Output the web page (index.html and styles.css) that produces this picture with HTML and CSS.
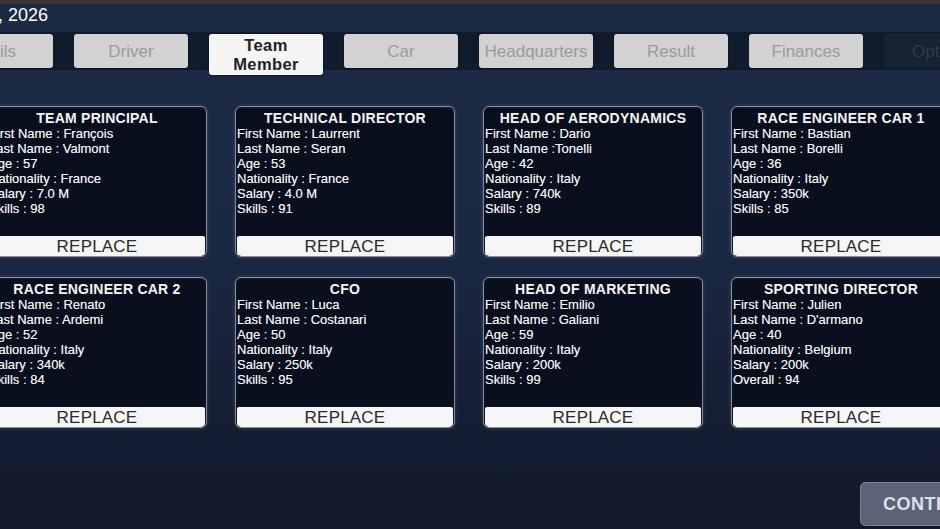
FILE: index.html
```html
<!DOCTYPE html>
<html>
<head>
<meta charset="utf-8">
<link rel="stylesheet" href="styles.css">
</head>
<body>
<div class="page">
  <div class="topstrip"></div>
  <div class="header"><span class="date">, 2026</span></div>
  <nav class="tabs">
    <div class="tab first">Details</div>
    <div class="tab">Driver</div>
    <div class="tab active">Team<br>Member</div>
    <div class="tab">Car</div>
    <div class="tab">Headquarters</div>
    <div class="tab">Result</div>
    <div class="tab">Finances</div>
    <div class="tab disabled">Options</div>
  </nav>
  <main class="cards">
    <section class="card">
      <h2 class="title">TEAM PRINCIPAL</h2>
      <p>First Name : François</p>
      <p>Last Name : Valmont</p>
      <p>Age : 57</p>
      <p>Nationality : France</p>
      <p>Salary : 7.0 M</p>
      <p>Skills : 98</p>
      <div class="replace">REPLACE</div>
    </section>
    <section class="card">
      <h2 class="title">TECHNICAL DIRECTOR</h2>
      <p>First Name : Laurrent</p>
      <p>Last Name : Seran</p>
      <p>Age : 53</p>
      <p>Nationality : France</p>
      <p>Salary : 4.0 M</p>
      <p>Skills : 91</p>
      <div class="replace">REPLACE</div>
    </section>
    <section class="card">
      <h2 class="title">HEAD OF AERODYNAMICS</h2>
      <p>First Name : Dario</p>
      <p>Last Name :Tonelli</p>
      <p>Age : 42</p>
      <p>Nationality : Italy</p>
      <p>Salary : 740k</p>
      <p>Skills : 89</p>
      <div class="replace">REPLACE</div>
    </section>
    <section class="card">
      <h2 class="title">RACE ENGINEER CAR 1</h2>
      <p>First Name : Bastian</p>
      <p>Last Name : Borelli</p>
      <p>Age : 36</p>
      <p>Nationality : Italy</p>
      <p>Salary : 350k</p>
      <p>Skills : 85</p>
      <div class="replace">REPLACE</div>
    </section>
    <section class="card">
      <h2 class="title">RACE ENGINEER CAR 2</h2>
      <p>First Name : Renato</p>
      <p>Last Name : Ardemi</p>
      <p>Age : 52</p>
      <p>Nationality : Italy</p>
      <p>Salary : 340k</p>
      <p>Skills : 84</p>
      <div class="replace">REPLACE</div>
    </section>
    <section class="card">
      <h2 class="title">CFO</h2>
      <p>First Name : Luca</p>
      <p>Last Name : Costanari</p>
      <p>Age : 50</p>
      <p>Nationality : Italy</p>
      <p>Salary : 250k</p>
      <p>Skills : 95</p>
      <div class="replace">REPLACE</div>
    </section>
    <section class="card">
      <h2 class="title">HEAD OF MARKETING</h2>
      <p>First Name : Emilio</p>
      <p>Last Name : Galiani</p>
      <p>Age : 59</p>
      <p>Nationality : Italy</p>
      <p>Salary : 200k</p>
      <p>Skills : 99</p>
      <div class="replace">REPLACE</div>
    </section>
    <section class="card">
      <h2 class="title">SPORTING DIRECTOR</h2>
      <p>First Name : Julien</p>
      <p>Last Name : D'armano</p>
      <p>Age : 40</p>
      <p>Nationality : Belgium</p>
      <p>Salary : 200k</p>
      <p>Overall : 94</p>
      <div class="replace">REPLACE</div>
    </section>
  </main>
  <footer class="footer">
    <div class="continue">CONTINUE</div>
  </footer>
</div>
</body>
</html>
```

FILE: styles.css
```css
html, body {
  margin: 0;
  padding: 0;
  width: 940px;
  height: 529px;
  overflow: hidden;
  background: #141e32;
}

.page {
  width: 940px;
  height: 529px;
  overflow: hidden;
  font-family: "Liberation Sans", Arial, sans-serif;
  background: linear-gradient(180deg, #1c2a46 0%, #1b2844 45%, #141e33 80%, #111a2b 100%);
  color: #ffffff;
}

.topstrip {
  height: 4px;
  background: #3a3530;
}

.header {
  height: 28px;
  display: flex;
  align-items: flex-start;
}

.date {
  margin-left: -2px;
  margin-top: 1px;
  font-size: 18px;
  color: #ffffff;
  line-height: 20px;
}

.tabs {
  display: flex;
  gap: 21px;
  height: 38px;
  margin-left: -61px;
  padding-top: 2px;
  box-sizing: border-box;
  background: #111b2e;
  align-items: flex-start;
}

.tab {
  flex: 0 0 114px;
  height: 34px;
  box-sizing: border-box;
  background: #d2d2d2;
  border-radius: 3px;
  color: #9b9b9b;
  font-size: 17px;
  padding-top: 1px;
  display: flex;
  align-items: center;
  justify-content: center;
  text-align: center;
  box-shadow: 0 1px 2px rgba(0,0,0,0.35);
}

.tab.first {
  padding-right: 12px;
}

.tab.active {
  height: 41px;
  padding-top: 0;
  background: #f5f5f5;
  color: #222222;
  font-weight: bold;
  font-size: 16.5px;
  letter-spacing: 0.4px;
  line-height: 19px;
}

.tab.disabled {
  background: #172235;
  color: #2f3b50;
  box-shadow: none;
  justify-content: flex-start;
  padding-left: 28px;
}

.cards {
  display: grid;
  grid-template-columns: repeat(4, 220px);
  grid-auto-rows: 151px;
  column-gap: 28px;
  row-gap: 20px;
  margin-left: -13px;
  margin-top: 36px;
}

.card {
  box-sizing: border-box;
  border: 1px solid #858ea0;
  border-radius: 6px;
  background: #0a0f1d;
  display: flex;
  flex-direction: column;
  padding-top: 4px;
  overflow: hidden;
  box-shadow: 0 0 4px rgba(160,175,200,0.25), inset 0 1px 2px rgba(255,255,255,0.08);
}

.title {
  margin: 0;
  font-size: 14px;
  line-height: 15px;
  font-weight: bold;
  letter-spacing: 0.25px;
  text-align: center;
  color: #f4f4f4;
}

.card p {
  margin: 0;
  padding-left: 1px;
  font-size: 13px;
  line-height: 15px;
  color: #f4f4f4;
  white-space: nowrap;
  text-shadow: 0 0 0.4px rgba(255,255,255,0.6);
}

.replace {
  margin: auto 1px 0 1px;
  height: 20px;
  background: #f6f6f6;
  border-radius: 2px 2px 4px 4px;
  color: #2a2a2a;
  font-size: 17px;
  letter-spacing: 0.2px;
  line-height: 21px;
  text-align: center;
}

.footer {
  display: flex;
  justify-content: flex-end;
  margin-top: 54px;
  margin-right: -80px;
}

.continue {
  width: 160px;
  height: 44px;
  box-sizing: border-box;
  background: #5a6377;
  border: 1px solid #7b8497;
  border-radius: 5px;
  color: #dde1e8;
  font-weight: bold;
  font-size: 18px;
  letter-spacing: 0.5px;
  display: flex;
  align-items: center;
  padding-left: 22px;
}
```
